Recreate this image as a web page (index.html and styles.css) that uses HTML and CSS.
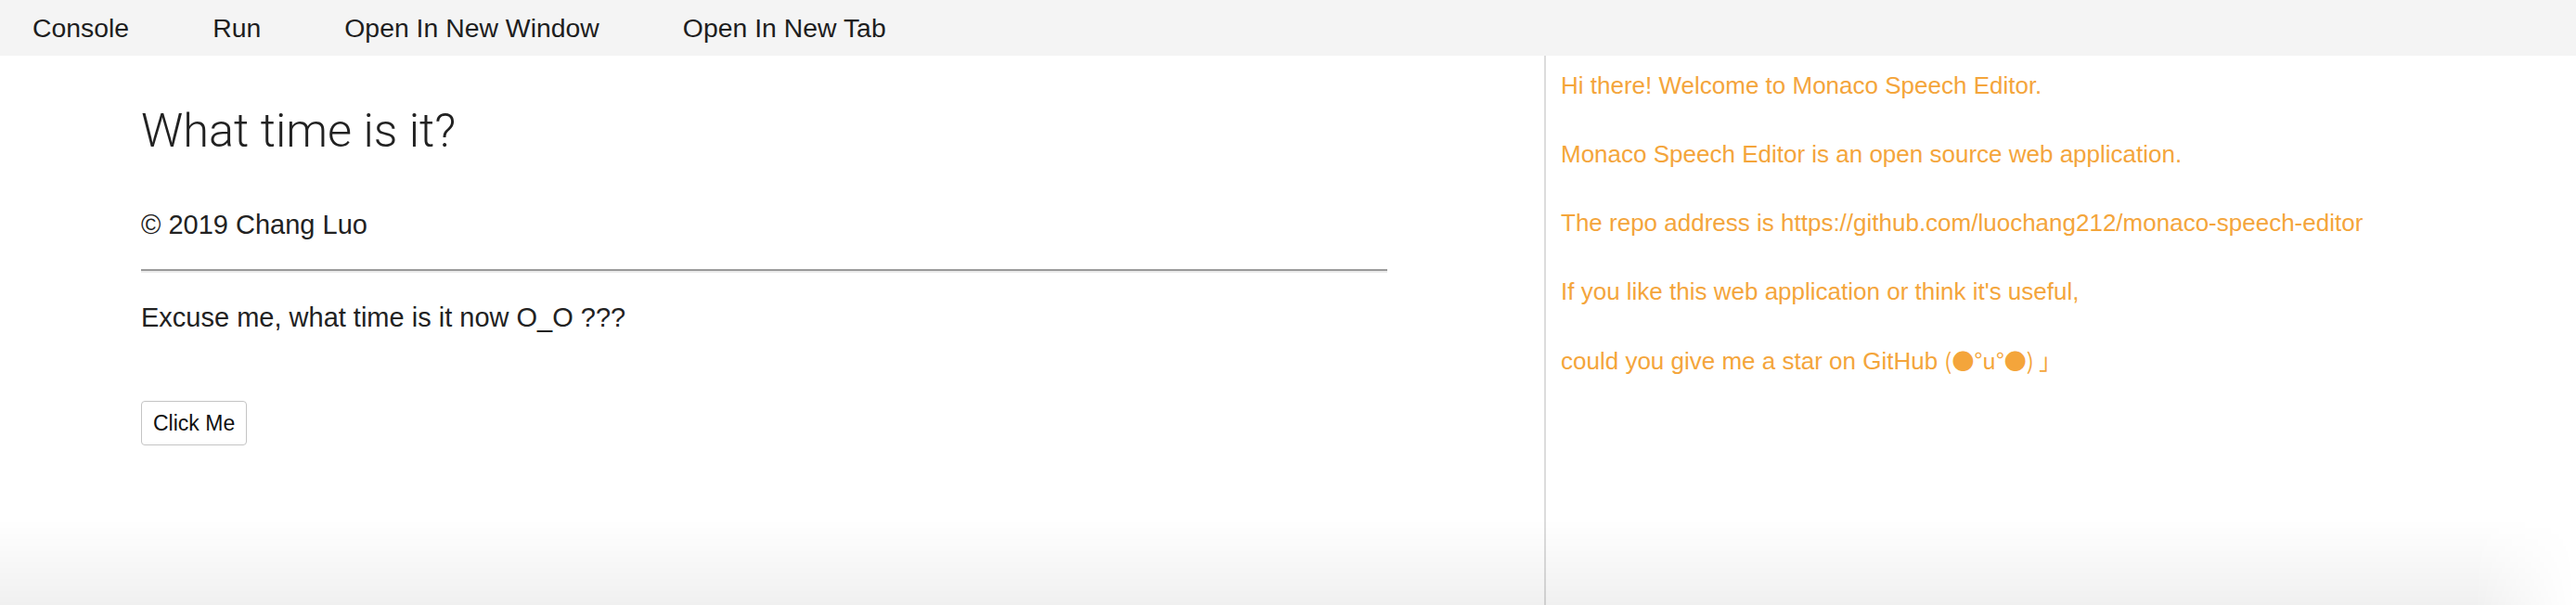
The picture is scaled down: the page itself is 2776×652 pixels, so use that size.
FILE: index.html
```html
<!DOCTYPE html>
<html>
<head>
<meta charset="utf-8">
<title>Monaco Speech Editor</title>
<link rel="stylesheet" href="styles.css">
</head>
<body>
<div class="app">
  <nav class="toolbar">
    <span class="tool">Console</span>
    <span class="tool">Run</span>
    <span class="tool">Open In New Window</span>
    <span class="tool">Open In New Tab</span>
  </nav>
  <main class="workspace">
    <section class="preview">
      <div class="page">
        <h2 class="title">What time is it?</h2>
        <p class="copy">© 2019 Chang Luo</p>
        <hr class="rule">
        <p class="question">Excuse me, what time is it now O_O ???</p>
        <button class="btn" type="button">Click Me</button>
      </div>
    </section>
    <section class="console">
      <p class="log">Hi there! Welcome to Monaco Speech Editor.</p>
      <p class="log">Monaco Speech Editor is an open source web application.</p>
      <p class="log">The repo address is https://github.com/luochang212/monaco-speech-editor</p>
      <p class="log">If you like this web application or think it's useful,</p>
      <p class="log">could you give me a star on GitHub <span class="kao">(●°u°●)​ 」</span></p>
    </section>
  </main>
  <div class="shade"></div>
</div>
</body>
</html>
```
FILE: styles.css
```css
html, body {
  margin: 0;
  padding: 0;
  background: #ffffff;
}
body {
  font-family: "Liberation Sans", Arial, "Noto Sans CJK SC", sans-serif;
  color: #222;
}
.app {
  position: relative;
  width: 2776px;
  height: 652px;
  overflow: hidden;
  display: flex;
  flex-direction: column;
}
.toolbar {
  height: 60px;
  flex: none;
  background: #f4f4f4;
  display: flex;
  align-items: center;
  gap: 90px;
  padding-left: 35px;
  font-size: 28.4px;
  color: #1e1e1e;
}
.workspace {
  flex: 1;
  display: flex;
}
.preview {
  width: 1664px;
  flex: none;
  padding-left: 152px;
  box-sizing: border-box;
}
.page {
  width: 1343px;
  padding-top: 52px;
}
.title {
  margin: 0;
  font-family: Roboto, "Liberation Sans", sans-serif;
  font-weight: 300;
  font-size: 50.5px;
  line-height: 58px;
  color: #222;
}
.copy {
  margin: 52px 0 0;
  font-size: 29px;
  line-height: 40px;
  color: #222;
}
.rule {
  margin: 28px 0 0;
  height: 0;
  border: 0;
  border-top: 2px solid #9a9a9a;
  border-bottom: 2px solid #ececec;
}
.question {
  margin: 28px 0 0;
  font-size: 29px;
  line-height: 40px;
  color: #222;
}
.btn {
  display: block;
  margin-top: 70px;
  height: 48px;
  padding: 0 12px;
  background: #fff;
  border: 1px solid #c4c4c4;
  border-radius: 4px;
  font-family: "Liberation Sans", Arial, sans-serif;
  font-size: 23px;
  color: #111;
}
.console {
  flex: 1;
  border-left: 2px solid #dcdcdc;
  padding: 8px 0 0 16px;
  color: #f4a53b;
  font-size: 26px;
}
.log {
  margin: 0 0 26px;
  line-height: 48px;
  white-space: nowrap;
  font-family: "Liberation Sans", Arial, "Noto Sans CJK SC", sans-serif;
}
.kao {
  font-family: "Noto Sans CJK SC", sans-serif;
  font-size: 24px;
}
.shade {
  position: absolute;
  left: 0;
  right: 0;
  bottom: 0;
  height: 92px;
  background: linear-gradient(to bottom, rgba(0,0,0,0), rgba(0,0,0,0.06));
  -webkit-mask-image: linear-gradient(to right, #000 calc(100% - 110px), transparent 100%);
  mask-image: linear-gradient(to right, #000 calc(100% - 110px), transparent 100%);
  pointer-events: none;
}
```
